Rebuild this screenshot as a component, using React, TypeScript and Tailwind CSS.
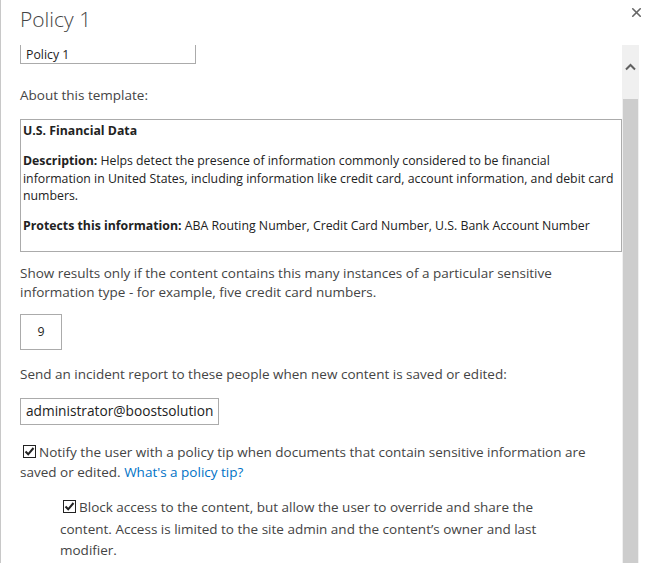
import React from "react";
import { X } from "lucide-react";

const CheckIcon = () => (
  <svg width="13" height="13" viewBox="0 0 13 13" className="inline-block ml-[3px] mr-[3px] -mt-[3px] align-middle">
    <rect x="0.5" y="0.5" width="12" height="12" fill="white" stroke="#222" />
    <path d="M2.5 6.5 L5.2 9.3 L10.5 3" fill="none" stroke="#222" strokeWidth="2" />
  </svg>
);

const Scrollbar = () => (
  <div className="w-[17px] shrink-0 flex flex-col bg-[#f0f0f0]">
    <div className="h-[54px] flex items-start justify-center pt-[18px]">
      <svg width="11" height="8" viewBox="0 0 11 8">
        <path d="M1 6.5 L5.5 2 L10 6.5" fill="none" stroke="#606060" strokeWidth="2" />
      </svg>
    </div>
    <div className="flex-1 bg-[#cdcdcd] mx-[1px]" />
  </div>
);

export default function App() {
  return (
    <div
      className="w-[660px] h-[563px] bg-white flex flex-col overflow-hidden border-l border-[#c8c8c8] text-[#444]"
      style={{ fontFamily: '"Open Sans", "Noto Sans", sans-serif' }}
    >
      <div className="h-[45px] shrink-0 flex items-start justify-between pl-[19px] pr-[16px]">
        <h1 className="text-[21px] font-light leading-none mt-[9px] text-[#444]">Policy 1</h1>
        <X className="mt-[5px] text-[#666]" size={15} strokeWidth={2.6} />
      </div>
      <div className="flex-1 flex min-h-0 pr-[21px]">
        <div className="flex-1 overflow-hidden pl-[19px] text-[13.5px]">
          <div className="-mt-[4px]">
            <div className="w-[176px] h-[23px] border border-[#ababab] flex items-center px-[5px] pt-[5px] text-[12.3px] leading-none text-[#222]">
              Policy 1
            </div>
            <p className="mt-[21px]">About this template:</p>
            <div className="mt-[14px] border border-[#ababab] pl-[2px] pr-[6px] pt-[2px] pb-[16px] text-[12.3px] text-[#222] leading-[17.5px]">
              <p className="font-bold">U.S. Financial Data</p>
              <p className="mt-[12.5px]">
                <span className="font-bold">Description:</span> Helps detect the presence of information commonly considered to be financial information in United States, including information like credit card, account information, and debit card numbers.
              </p>
              <p className="mt-[12.5px]">
                <span className="font-bold">Protects this information:</span> ABA Routing Number, Credit Card Number, U.S. Bank Account Number
              </p>
            </div>
            <p className="mt-[12px] leading-[19px]">
              Show results only if the content contains this many instances of a particular sensitive information type - for example, five credit card numbers.
            </p>
            <div className="mt-[12px] w-[42px] h-[36px] border border-[#ababab] flex items-center justify-center text-[12.3px] text-[#222]">
              9
            </div>
            <p className="mt-[14px]">Send an incident report to these people when new content is saved or edited:</p>
            <div className="mt-[14px] w-[199px] h-[27px] border border-[#ababab] flex items-center px-[5px] text-[13.7px] text-[#222]">
              administrator@boostsolution
            </div>
            <p className="mt-[18px] leading-[19.5px]">
              <CheckIcon />Notify the user with a policy tip when documents that contain sensitive information are saved or edited.{" "}
              <a className="text-[#0072c6]">What's a policy tip?</a>
            </p>
            <p className="mt-[15px] ml-[40px] mr-[50px] leading-[21.5px]">
              <CheckIcon />Block access to the content, but allow the user to override and share the content. Access is limited to the site admin and the content’s owner and last modifier.
            </p>
          </div>
        </div>
        <Scrollbar />
      </div>
    </div>
  );
}
